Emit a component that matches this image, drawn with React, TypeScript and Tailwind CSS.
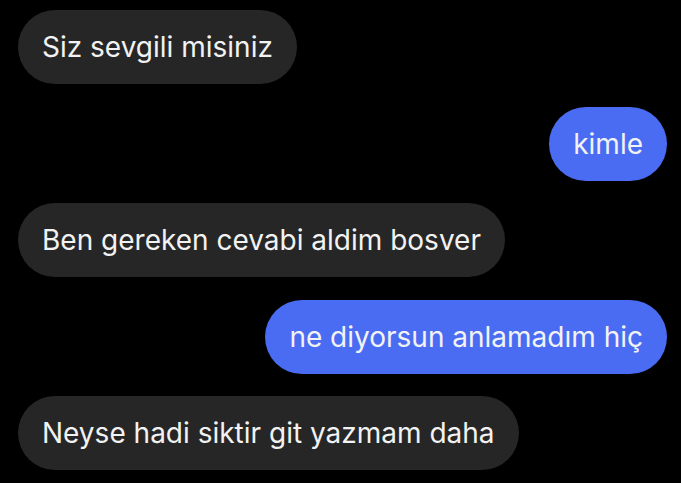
import React from "react";

const msgs: { text: string; me: boolean }[] = [
  { text: "Siz sevgili misiniz", me: false },
  { text: "kimle", me: true },
  { text: "Ben gereken cevabi aldim bosver", me: false },
  { text: "ne diyorsun anlamadım hiç", me: true },
  { text: "Neyse hadi siktir git yazmam daha", me: false },
];

export default function App() {
  return (
    <div className="w-[681px] h-[483px] bg-black overflow-hidden flex flex-col gap-[22.5px] pt-[10px] pl-[18px] pr-[14px]" style={{ fontFamily: "Inter, 'Noto Sans', sans-serif" }}>
      {msgs.map((m, i) => (
        <div key={i} className={`flex ${m.me ? "justify-end" : "justify-start"}`}>
          <div
            className={`h-[74px] rounded-full px-[24px] flex items-center text-[28px] leading-none text-[#f2f2f2] whitespace-nowrap ${m.me ? "bg-[#4a6cf2]" : "bg-[#262626]"}`}
          >
            {m.text}
          </div>
        </div>
      ))}
    </div>
  );
}
